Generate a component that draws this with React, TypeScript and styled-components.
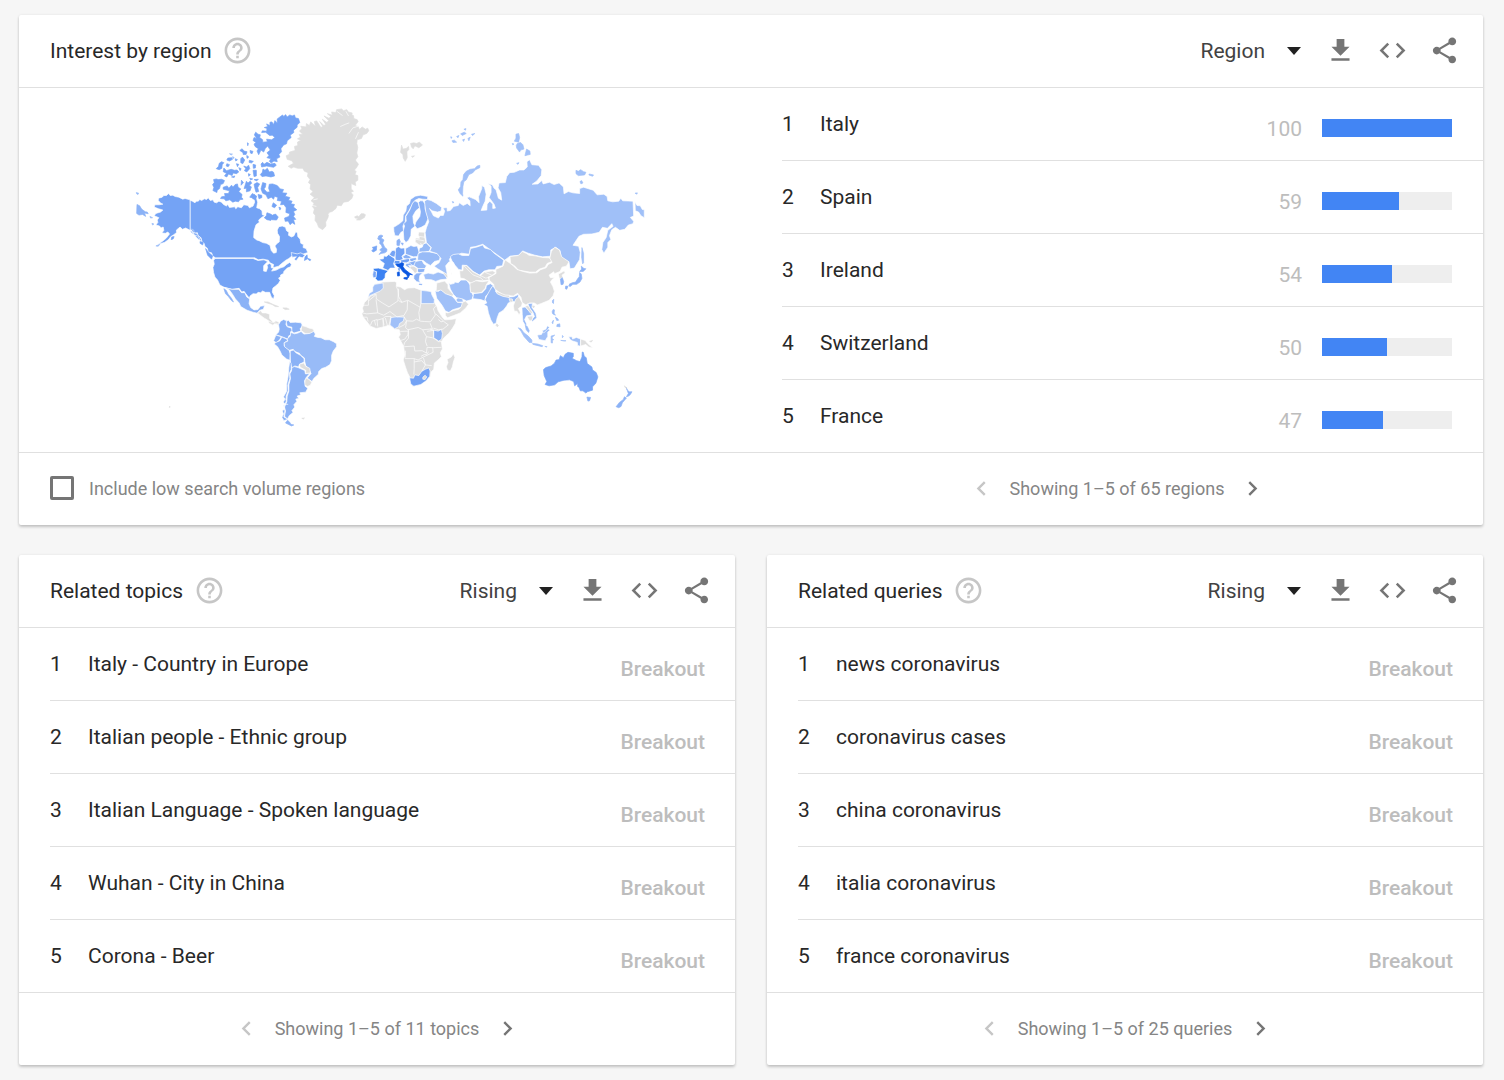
import React, { useId, useState } from "react";
import styled, { createGlobalStyle } from "styled-components";

const GlobalStyle = createGlobalStyle`
  *, *::before, *::after { box-sizing: border-box; }
  body {
    margin: 0;
    background: #f6f6f6;
    color: #282828;
    font-family: Roboto, "Liberation Sans", sans-serif;
    font-size: 21px;
    line-height: 24px;
  }
`;

const Page = styled.main`
  display: grid;
  grid-template-columns: repeat(2, minmax(0, 1fr));
  gap: 30px 32px;
  padding: 15px 21px 14px 19px;
`;

const Card = styled.section<{ $wide?: boolean }>`
  grid-column: ${(p) => (p.$wide ? "1 / -1" : "auto")};
  background: #fff;
  border-radius: 2px;
  box-shadow: 0 2px 3px rgba(0, 0, 0, 0.2), 0 0 3px rgba(0, 0, 0, 0.07);
`;

const Header = styled.header`
  display: flex;
  align-items: center;
  min-height: 73px;
  padding: 0 13px 0 31px;
  border-bottom: 1px solid #e0e0e0;
`;

const Title = styled.h2`
  margin: 0;
  font-size: 21px;
  font-weight: 400;
`;

const IconButton = styled.button<{ $width: number; $tone?: string }>`
  display: flex;
  align-items: center;
  justify-content: center;
  width: ${(p) => p.$width}px;
  height: 48px;
  padding: 0 0 1px;
  border: 0;
  background: none;
  color: ${(p) => p.$tone ?? "#757575"};
  cursor: pointer;
  &:disabled { cursor: default; }
`;

const Icon = styled.svg<{ $size: number }>`
  display: block;
  flex: none;
  width: ${(p) => p.$size}px;
  height: ${(p) => p.$size}px;
  fill: currentColor;
`;

const Tools = styled.div`
  display: flex;
  align-items: center;
  margin-left: auto;
`;

const Picker = styled.label`
  display: grid;
  align-items: center;
  margin-right: 13px;
  > * { grid-area: 1 / 1; }
`;

const PickerArrow = styled.svg`
  justify-self: end;
  width: 14px;
  height: 8px;
  fill: #212121;
  pointer-events: none;
`;

const Select = styled.select`
  appearance: none;
  width: 130px;
  height: 40px;
  padding: 0 36px 0 0;
  border: 0;
  background: transparent;
  color: #424242;
  font: inherit;
  text-align-last: right;
  cursor: pointer;
`;

const RegionBody = styled.div`
  display: grid;
  grid-template-columns: repeat(2, minmax(0, 1fr));
`;

const MapFrame = styled.figure`
  display: flex;
  justify-content: center;
  align-items: center;
  margin: 0;
  padding: 0 0 6px 10px;
`;

const MapDrawing = styled.svg`
  display: block;
  width: 71%;
  height: auto;
  stroke: #fff;
  stroke-width: 2;
  stroke-linejoin: round;
`;

const List = styled.ol`
  margin: 0 0 0 31px;
  padding: 0;
  list-style: none;
`;

const Row = styled.li`
  display: flex;
  align-items: center;
  height: 73px;
  padding-right: 30px;
  border-bottom: 1px solid #e0e0e0;
  &:last-child {
    height: 72px;
    border-bottom: 0;
  }
`;

const Rank = styled.span`
  flex: none;
  width: 38px;
`;

const Name = styled.span`
  flex: 1;
`;

const Value = styled.span<{ $strong?: boolean }>`
  padding-top: 10px;
  color: #bdbdbd;
  font-weight: ${(p) => (p.$strong ? 500 : 400)};
`;

const Track = styled.div`
  width: 130px;
  height: 18px;
  margin: 8px 1px 0 20px;
  background: #eee;
`;

const Fill = styled.div`
  height: 100%;
  background: #4285f4;
`;

const Footer = styled.footer<{ $split?: boolean }>`
  display: grid;
  grid-template-columns: ${(p) => (p.$split ? "repeat(2, minmax(0, 1fr))" : "1fr")};
  align-items: center;
  min-height: 73px;
  border-top: 1px solid #e0e0e0;
  color: #858585;
  font-size: 18px;
`;

const Option = styled.label`
  display: flex;
  align-items: center;
  gap: 15px;
  padding-left: 31px;
`;

const Tick = styled.input`
  appearance: none;
  width: 24px;
  height: 24px;
  margin: 0 0 3px;
  border: 3px solid #757575;
  border-radius: 2px;
  &:checked { background: #757575; }
`;

const PagerBar = styled.nav<{ $inset?: boolean }>`
  display: flex;
  align-items: center;
  justify-content: center;
  padding: ${(p) => (p.$inset ? "0 31px" : "0")};
`;

const PagerText = styled.span`
  margin: 0 14px;
`;

const ICONS = {
  help: "M11 18h2v-2h-2v2zm1-16C6.48 2 2 6.48 2 12s4.48 10 10 10 10-4.48 10-10S17.52 2 12 2zm0 18c-4.41 0-8-3.59-8-8s3.59-8 8-8 8 3.59 8 8-3.59 8-8 8zm0-14c-2.21 0-4 1.79-4 4h2c0-1.1.9-2 2-2s2 .9 2 2c0 2-3 1.75-3 5h2c0-2.25 3-2.5 3-5 0-2.21-1.79-4-4-4z",
  download: "M19 9h-4V3H9v6H5l7 7 7-7zM5 18v2h14v-2H5z",
  code: "M9.4 16.6L4.8 12l4.6-4.6L8 6l-6 6 6 6 1.4-1.4zm5.2 0l4.6-4.6-4.6-4.6L16 6l6 6-6 6-1.4-1.4z",
  share: "M18 16.08c-.76 0-1.44.3-1.96.77L8.91 12.7c.05-.23.09-.46.09-.7s-.04-.47-.09-.7l7.05-4.11c.54.5 1.25.81 2.04.81 1.66 0 3-1.34 3-3s-1.34-3-3-3-3 1.34-3 3c0 .24.04.47.09.7L8.04 9.81C7.5 9.31 6.79 9 6 9c-1.66 0-3 1.34-3 3s1.34 3 3 3c.79 0 1.5-.31 2.04-.81l7.12 4.16c-.05.21-.08.43-.08.65 0 1.61 1.31 2.92 2.92 2.92s2.92-1.31 2.92-2.92-1.31-2.92-2.92-2.92z",
  prev: "M15.41 7.41L14 6l-6 6 6 6 1.41-1.41L10.83 12z",
  next: "M10 6L8.59 7.41 13.17 12l-4.58 4.59L10 18l6-6z",
};

function Glyph({ name, size = 31 }: { name: keyof typeof ICONS; size?: number }) {
  return (
    <Icon $size={size} viewBox="0 0 24 24" aria-hidden="true">
      <path d={ICONS[name]} />
    </Icon>
  );
}

function CardHeader({ title, options }: { title: string; options: string[] }) {
  const id = useId();
  return (
    <Header>
      <Title>{title}</Title>
      <IconButton $width={52} $tone="#c6c6c6" type="button" aria-label={`Help: ${title}`}>
        <Glyph name="help" />
      </IconButton>
      <Tools>
        <Picker htmlFor={id}>
          <Select id={id} aria-label={`${title} view`}>
            {options.map((o) => (
              <option key={o}>{o}</option>
            ))}
          </Select>
          <PickerArrow viewBox="0 0 14 8" aria-hidden="true">
            <path d="M0 0h14L7 8z" />
          </PickerArrow>
        </Picker>
        <IconButton $width={52} type="button" aria-label="Download CSV"><Glyph name="download" /></IconButton>
        <IconButton $width={52} type="button" aria-label="Embed"><Glyph name="code" /></IconButton>
        <IconButton $width={52} type="button" aria-label="Share"><Glyph name="share" /></IconButton>
      </Tools>
    </Header>
  );
}

function Pager({ total, noun, inset }: { total: number; noun: string; inset?: boolean }) {
  return (
    <PagerBar $inset={inset} aria-label={`${noun} pages`}>
      <IconButton $width={29} $tone="#c6c6c6" type="button" disabled aria-label="Previous"><Glyph name="prev" size={29} /></IconButton>
      <PagerText>Showing 1–5 of {total} {noun}</PagerText>
      <IconButton $width={29} type="button" aria-label="Next"><Glyph name="next" size={29} /></IconButton>
    </PagerBar>
  );
}

/* Shades of the interest scale, from no data to the top region. */
const C = {
  none: "#dedede",
  low: "#a0c0f8",
  mild: "#98bbf7",
  mid: "#8bb2f6",
  high: "#74a3f5",
  strong: "#639af4",
  top: "#3c82f2",
  max: "#0b57e0",
};

type Shape = [fill: string, points: string];
/* "shapes" get a white frontier line; "isles" are outlined in their own colour. */
type Sheet = { x: number; y: number; shapes?: Shape[]; isles?: Shape[]; borders?: string };

const SHEETS: Sheet[] = [
  {
    // Canada, United States, Mexico
    x: 570, y: 600,
    shapes: [
      [C.high, "-5,2 2,5 10,10 14,5 20,5 24,0 30,3 38,-2 45,0 50,-5 56,3 64,1 68,8 75,10 82,5 90,8 96,15 105,20 108,14 114,24 130,22 133,28 139,22 150,25 157,16 170,18 174,25 185,20 190,8 187,-6 194,-9 199,8 196,25 205,28 212,34 213,46 221,48 211,54 202,62 204,69 194,76 188,95 187,115 196,122 205,125 214,130 225,132 236,138 240,154 247,162 255,160 256,150 251,140 258,132 264,128 265,112 259,102 258,92 263,82 273,80 283,84 286,94 293,99 292,108 301,113 308,110 314,97 319,101 320,112 327,120 329,132 337,136 336,145 345,148 350,160 335,165 318,168 305,168 293,178 284,183 275,190 262,201 245,206 247,196 236,191 231,183 215,180 201,182 190,176 72,176 64,171 60,161 50,158 47,147 40,142 37,131 31,128 28,115 20,111 17,100 8,102 4,91 -5,92"],
      [C.high, "70,178 185,178 200,184 218,182 230,188 224,192 217,200 217,216 225,217 229,205 227,197 235,193 240,197 240,206 247,207 241,216 255,213 266,207 278,203 286,196 295,190 301,195 298,203 288,207 278,217 277,223 268,228 268,233 262,237 267,244 262,253 254,260 245,267 243,279 249,290 247,300 240,294 235,280 222,280 214,276 208,281 200,280 195,285 185,284 176,291 174,298 168,290 163,284 158,277 151,279 143,268 122,271 98,265 85,258 78,243 70,234 66,220 64,205 68,195 66,184"],
      [C.mid, "98,265 120,271 142,271 150,281 160,281 166,294 175,300 173,314 178,326 188,333 200,332 207,322 220,320 216,331 205,334 198,343 185,340 167,334 148,323 143,312 132,300 122,284 113,272"],
      [C.none, "198,342 208,335 213,342 224,342 235,346 235,359 246,370 256,369 265,374 262,379 251,375 241,376 228,363 219,358"],
      [C.high, "300,160 318,164 329,161 342,168 334,176 324,173 315,185 309,180 316,173 303,174"],
    ],
    isles: [
      [C.mid, "97,269 104,274 110,286 120,298 126,309 120,305 110,292 102,284"],
      [C.none, "219,309 230,309 246,317 262,323 252,323 243,317 230,313"],
      [C.none, "275,327 286,327 294,331 282,332"],
      [C.high, "342,173 348,167 349,177 359,181 357,185 349,179 340,184"],
      [C.mild, "0,88 8,94 4,102 -2,98"], [C.high, "11,102 18,106 23,121 14,112"],
      [C.high, "26,125 35,130 33,137 25,132"], [C.high, "42,148 50,159 63,170 60,180 48,168"],
      [C.high, "246,46 253,44 261,53 256,62 242,61 239,55"],
    ],
  },
  {
    // Alaska
    x: 390, y: 555,
    shapes: [
      [C.high, "175,46 168,44 160,42 153,44 141,38 130,36 123,32 115,33 110,27 104,33 96,33 91,38 80,41 79,48 87,56 93,59 82,61 69,61 67,68 80,73 93,77 86,83 72,87 67,94 81,100 76,107 78,114 72,122 83,125 87,131 94,128 96,138 90,146 101,147 108,143 113,149 103,162 92,171 78,181 99,174 110,166 117,157 126,151 134,145 134,137 145,128 152,135 162,131 175,138"],
      [C.high, "178,137 184,145 193,147 205,158 211,171 205,169 200,156 188,152"],
    ],
    isles: [
      [C.mid, "15,60 23,64 29,74 40,82 46,83 49,88 38,86 41,96 32,90 21,92 14,87"],
      [C.mild, "13,24 20,26 18,30 14,28"], [C.high, "120,158 127,157 124,164 118,166"],
      [C.mild, "54,96 62,100 56,101"], [C.mild, "72,185 84,180 79,186"],
      [C.mild, "60,117 66,119 62,122"],
    ],
  },
  {
    // Western Arctic archipelago
    x: 390, y: 300,
    isles: [
      [C.high, "246,240 254,238 260,240 270,239 279,243 275,252 267,255 264,267 257,272 256,279 244,273 247,264 243,255 248,249"],
      [C.high, "287,259 292,266 300,257 305,262 311,255 318,253 320,263 328,268 322,276 332,285 330,293 335,299 325,301 321,307 312,305 304,308 295,301 283,304 278,298 267,297 270,292 281,290 279,282 291,282 294,274 275,269 275,263"],
      [C.high, "277,205 285,213 299,209 309,212 317,211 322,217 315,222 305,220 302,228 291,223 286,232 279,229 285,221 275,216"],
      [C.high, "263,191 270,186 277,189 272,195 271,206 263,210 254,207 261,200"],
      [C.high, "289,175 301,174 303,179 294,184 286,181"],
      [C.high, "325,152 332,147 338,154 347,156 344,164 335,164 335,159"],
      [C.high, "346,167 352,172 347,176"], [C.high, "328,177 333,172 340,181 334,192 328,189"],
      [C.high, "337,199 345,202 352,197 355,207 346,217 339,213 343,207"],
      [C.high, "365,194 373,196 372,205 366,206"], [C.high, "365,212 375,212 375,229 368,231"],
      [C.high, "351,222 357,225 352,230"], [C.high, "330,242 336,249 329,257"],
      [C.high, "345,245 350,250 357,244 361,251 354,257 360,262 356,274 345,277 345,266 338,267"],
      [C.high, "368,254 377,249 385,253 379,264 382,276 374,278 371,268"],
      [C.high, "363,282 371,287 367,296 355,293"], [C.high, "348,129 351,131 349,138"],
      [C.mild, "294,162 303,163 299,166"], [C.high, "354,182 366,185 360,190 353,188"],
      [C.high, "315,192 322,194 318,201"], [C.high, "356,152 365,155 362,162 357,160"],
      [C.high, "380,285 391,287 392,294 383,298"], [C.high, "286,192 294,195 290,201 284,199"],
      [C.high, "322,204 329,207 326,213"], [C.high, "355,236 364,238 358,241"], [C.high, "311,177 318,180 313,184"],
      [C.high, "300,232 310,229 308,234"], [C.high, "368,240 381,239 376,244"], [C.mild, "303,171 308,173 305,177"],
    ],
  },
  {
    // Ellesmere, Devon, Baffin, Greenland, Iceland
    x: 690, y: 300,
    isles: [
      [C.high, "146,51 154,45 158,50 163,44 168,51 176,45 183,48 190,45 193,54 202,56 206,68 198,75 198,82 187,91 188,98 177,106 180,113 168,123 166,132 157,136 149,147 151,156 143,164 146,172 136,177 138,186 128,184 120,190 114,185 119,177 107,174 113,167 107,159 117,151 109,139 102,146 97,157 89,151 82,165 77,154 81,147 71,140 68,133 74,128 65,122 68,113 76,117 69,105 73,97 80,103 87,105 85,113 94,120 94,127 108,126 106,118 121,120 131,113 123,106 115,107 103,97 91,98 93,93 106,94 107,86 99,83 109,80 106,72 116,77 116,67 122,66 127,74 131,62 138,69 138,57"],
      [C.high, "89,193 94,188 98,194 107,188 118,193 131,191 135,197 127,203 106,199 91,202"],
      [C.high, "95,208 101,212 108,206 114,217 122,215 127,218 130,229 119,232 104,229 92,231 87,225 93,218"],
      [C.high, "94,249 104,252 102,263 98,268 107,278 116,277 112,266 114,254 124,253 138,258 147,268 157,270 153,280 167,281 162,290 176,294 172,302 183,305 179,313 190,315 187,323 197,331 187,336 191,345 187,351 194,360 187,360 191,375 183,370 177,376 171,365 162,366 160,356 173,351 176,343 164,339 165,325 158,315 148,316 151,305 138,303 140,294 130,290 127,299 120,293 110,298 104,286 94,281 89,268"],
      [C.high, "126,310 136,317 130,325 122,321"], [C.high, "107,340 118,344 126,349 119,363 107,361 99,355 105,349"],
      [C.high, "68,285 76,290 72,300 64,298"], [C.high, "143,323 149,326 146,332"],
      [C.none, "317,29 332,27 338,32 348,29 352,36 364,39 363,45 368,47 369,56 379,59 382,65 373,77 382,80 386,89 394,81 404,88 411,85 414,93 408,101 397,105 392,116 379,120 378,131 381,143 378,160 381,171 374,181 383,194 377,204 371,211 376,216 372,225 381,228 381,242 373,247 375,258 361,252 361,268 368,275 360,278 367,286 363,297 352,306 338,308 331,319 319,317 315,327 304,336 294,339 291,355 284,368 285,380 275,391 263,384 258,371 252,363 253,348 247,341 250,329 244,321 249,311 240,304 250,294 237,284 246,276 237,268 239,255 232,249 237,240 229,230 231,219 220,215 215,206 199,206 188,202 180,206 171,200 187,191 182,183 168,179 165,168 174,164 175,157 192,152 190,140 200,137 199,127 209,121 199,117 208,112 204,104 215,103 205,94 212,86 209,79 225,81 226,71 235,77 239,66 253,79 250,65 257,63 270,83 275,79 266,65 279,77 284,73 274,58 288,68 293,62 279,48 294,55 300,50 289,41 304,46 302,36 315,38"],
      [C.none, "371,353 379,349 384,352 391,343 399,343 404,346 401,354 388,362 377,362 382,357 374,356"],
    ],
    borders: "M318,34L335,47M328,80L344,73L355,69M354,101L366,84L382,79M374,117L383,97M345,34L353,48M377,185L386,188M363,282L373,286M240,317L256,321M291,344L303,349M247,301L260,298",
  },
  {
    // South America
    x: 750, y: 900,
    shapes: [
      [C.mid, "97,62 88,67 82,78 84,91 82,100 74,108 90,113 110,121 113,111 119,109 118,99 124,97 121,88 108,84 104,76 107,66"],
      [C.mid, "105,68 112,64 117,71 133,70 150,72 155,82 147,89 149,97 138,100 128,103 122,97 122,85 108,82"],
      [C.none, "152,80 165,84 175,88 185,90 190,98 179,104 162,104 150,95"],
      [C.mid, "74,109 90,114 85,124 75,132 67,126"],
      [C.mid, "72,132 86,126 92,115 107,121 109,126 99,132 99,142 114,154 117,165 116,185 106,181 92,169 87,158 79,144 69,136"],
      [C.mild, "108,121 117,112 119,101 130,105 140,103 150,98 158,106 176,104 188,98 193,106 190,113 201,116 210,117 222,123 235,123 248,129 257,135 257,144 247,157 242,170 242,186 237,198 224,206 212,210 203,219 202,227 188,240 183,249 168,239 180,225 173,211 164,201 161,189 160,178 149,170 145,164 130,158 126,152 114,155 100,144 99,132 110,127"],
      [C.mid, "117,157 127,154 134,162 148,170 159,180 159,190 145,197 142,205 131,202 123,208 118,196"],
      [C.none, "145,197 158,193 164,203 176,209 178,223 163,225 164,215 147,206"],
      [C.none, "163,238 173,242 182,251 178,260 169,264 160,259"],
      [C.mid, "122,207 130,204 141,207 161,216 163,226 176,225 166,236 160,247 162,263 170,269 164,281 146,283 149,289 138,293 143,300 134,302 137,309 128,319 131,326 122,337 126,342 114,352 109,362 100,354 103,338 100,326 107,310 108,293 113,278 113,259 118,240 116,226 121,217"],
      [C.mid, "116,187 120,195 120,213 115,223 116,240 110,260 111,277 105,293 105,309 98,325 101,338 98,356 110,363 98,367 92,357 97,347 93,337 100,333 97,322 102,318 96,311 101,303 97,295 106,279 106,259 111,232 113,206"],
      [C.none, "51,66 60,70 68,71 74,66 84,70 79,76 72,73 65,79 53,73"],
    ],
    isles: [
      [C.mid, "109,366 115,371 119,378 128,380 121,383 111,378 103,374"],
      [C.none, "152,360 160,359 157,362"],
    ],
    borders: "M94,317L111,318M96,300L107,303",
  },
  {
    // Africa, Arabia
    x: 1050, y: 810,
    shapes: [
      [C.none, "72,45 85,43 95,39 132,37 138,40 137,52 150,54 162,62 172,57 192,56 208,62 242,67 245,79 250,91 254,104 260,114 263,125 275,144 283,153 301,152 318,149 315,164 306,179 295,194 280,208 273,219 276,241 270,252 273,264 263,274 252,283 250,302 242,310 240,324 220,342 206,350 187,354 178,342 180,330 171,313 165,296 158,274 163,258 159,233 150,216 144,205 149,198 146,183 132,181 127,177 116,169 95,175 76,179 59,172 46,156 37,145 33,134 38,128 35,118 41,101 50,92 59,72 69,62"],
      [C.low, "72,46 84,44 97,42 98,57 89,66 73,73 57,80 51,88 56,73 66,67 66,54"],
      [C.low, "212,64 230,66 242,68 244,77 252,92 251,104 212,104"],
      [C.low, "121,146 138,144 161,145 158,157 147,164 144,174 132,180 125,174 118,169"],
      [C.mid, "250,184 263,187 273,182 276,194 274,211 265,217 250,207"],
      [C.high, "235,298 239,307 238,323 227,337 211,348 190,353 181,347 177,328 189,329 193,319 205,321 214,308 225,302"],
      [C.none, "217,326 224,320 229,325 224,333 217,332"],
      [C.none, "309,255 314,266 309,281 306,295 300,307 291,304 288,294 293,282 290,272 303,265"],
      [C.low, "254,65 264,67 271,61 284,71 304,80 314,91 321,100 339,102 336,114 319,119 306,123 296,131 285,126 275,109 259,88"],
      [C.none, "285,130 293,132 309,125 325,121 332,115 337,100 346,96 355,106 347,117 330,132 310,140 291,147 285,139"],
      [C.none, "259,42 283,36 293,47 293,58 309,76 307,82 285,74 272,63 257,67 258,56"],
      [C.low, "324,84 337,89 339,99 322,100 317,93"],
    ],
    borders: "M36,109L53,109L53,92L58,82L76,75L77,90L95,102L115,114L142,96L144,59M137,53L142,63L144,83L154,100L172,94L209,115L211,104L212,62M144,95L154,101M53,96L75,78M76,92L81,132L48,135L34,132M81,132L99,139L118,128L139,144L160,140L170,123L171,96M36,145L49,145L52,158M59,170L64,157L79,152L81,173M79,154L97,149L98,176M97,149L104,143L121,143L115,170M104,147L111,173M160,143L168,156L161,168L145,176M168,156L187,157L198,151L210,157L223,158L240,159L255,138L249,120L258,109M209,115L205,131L208,154M168,157L165,176L172,183L203,176L217,183L246,180L239,163M149,188L173,187L172,198L163,211L151,215M174,183L174,208L162,222L159,233M161,234L191,232L193,247L215,246L228,253L230,236L249,237L273,236M163,270L190,270L203,274L219,265L248,251L247,237M191,270L191,301L190,318M191,280L214,276L225,289L244,291M219,268L225,289L214,308M234,249L231,256L221,258L212,263M230,232L225,218L228,203L219,188L217,183M229,204L246,207L250,209M230,188L250,184M249,208L265,219L274,218M249,178L264,183L278,181L294,168L279,157L272,159L264,152M256,135L279,156M239,181L249,184L249,206M97,151L100,170M71,154L75,170M165,246L164,267",
  },
  {
    // Europe, Turkey, Iran
    x: 1050, y: 600,
    shapes: [
      [C.strong, "86,180 98,179 100,170 107,172 114,166 131,177 134,183 129,194 134,207 119,207 112,214 96,207 101,193 89,184"],
      [C.top, "68,208 83,207 102,212 113,215 104,224 103,236 94,245 81,246 74,238 78,218 68,216"],
      [C.high, "68,214 77,218 76,235 67,236 66,226"],
      [C.high, "133,160 136,146 144,142 151,147 162,146 163,163 154,171 158,180 150,185 134,183"],
      [C.high, "116,166 124,154 132,153 135,160 132,174 124,172"],
      [C.mid, "155,172 167,165 183,174 173,181 161,178"],
      [C.strong, "132,184 147,184 149,191 139,195 130,193"],
      [C.high, "149,183 163,180 176,178 178,186 168,191 152,190"],
      [C.mid, "177,178 196,175 199,181 184,188 178,185"],
      [C.mid, "172,190 185,187 195,184 198,189 189,200 177,198"],
      [C.mild, "195,187 214,183 220,194 228,200 223,209 204,209 190,199"],
      [C.mid, "201,209 224,208 221,219 207,221 201,218"],
      [C.mid, "166,193 177,192 188,200 174,199 183,210 176,207 165,200"],
      [C.none, "180,201 190,201 200,208 200,219 193,223 186,213 178,207"],
      [C.mid, "190,230 198,222 217,221 208,229 206,244 210,250 199,248 190,239"],
      [C.mid, "165,148 181,139 190,142 200,140 206,158 201,172 189,173 165,165"],
      [C.mild, "205,158 207,147 216,143 218,134 228,131 241,145 237,156 220,159"],
      [C.none, "205,98 223,99 222,112 226,128 216,137 206,137 194,128 195,116 207,117 203,107"],
      [C.mild, "203,163 215,158 237,158 260,163 270,171 267,183 252,187 240,199 228,192 218,184 201,183"],
      [C.low, "219,226 233,222 249,225 263,219 286,226 290,240 270,242 256,247 243,242 224,241"],
      [C.mid, "130,97 129,84 139,78 148,72 157,64 158,47 166,35 168,20 177,12 180,0 194,-10 210,-13 232,-9 231,0 217,-1 205,-3 194,2 187,11 181,23 175,34 165,50 164,69 157,80 159,95 151,99 144,110 133,109"],
      [C.mid, "158,95 162,80 159,73 167,66 166,51 178,31 186,11 193,4 203,9 207,25 196,34 187,50 189,71 194,80 182,90 181,109 174,123 166,130 160,121"],
      [C.mid, "204,9 209,4 217,4 224,14 224,29 230,45 233,58 224,77 212,84 200,88 193,79 196,68 208,51 210,37"],
      [C.low, "293,242 301,239 309,248 324,251 332,243 349,243 360,258 360,271 369,290 365,302 349,306 337,300 319,296 309,286 300,270"],
      [C.none, "277,220 289,217 304,222 306,236 295,241 286,232"],
    ],
    isles: [
      [C.mid, "84,110 91,107 97,110 91,116 100,122 96,131 102,144 109,150 108,157 102,161 91,163 85,166 93,155 87,152 95,145 92,137 87,133 88,124 81,119"],
      [C.high, "70,143 78,140 77,153 68,158 63,155 68,149 65,144"],
      [C.mid, "139,124 146,119 149,127 146,139 139,138"], [C.mid, "152,131 158,132 156,138"],
      [C.mid, "206,255 215,256 213,257 206,256"],
      [C.max, "135,195 146,194 154,190 160,194 157,202 163,211 177,222 186,227 178,226 173,236 168,226 157,218 148,205 141,202"],
      [C.max, "160,236 172,234 170,241 160,239"], [C.max, "140,220 146,218 147,230 141,231"], [C.strong, "143,209 147,207 146,215"],
      [C.none, "153,-164 157,-152 167,-154 174,-160 175,-151 169,-144 170,-126 164,-115 158,-125 157,-136 150,-142"],
      [C.none, "180,-169 190,-171 198,-169 207,-173 216,-164 205,-156 193,-162 188,-153 183,-158"],
      [C.none, "183,-130 192,-132 187,-127"],
    ],
    borders: "M198,110L223,114M196,120L222,125M209,132L216,137M158,172L163,163",
  },
  {
    // Russia
    x: 1350, y: 360,
    shapes: [
      [C.low, "-78,245 -70,240 -58,243 -42,252 -26,264 -28,275 -39,278 -55,274 -63,267 -57,277 -51,289 -36,296 -30,288 -21,288 -17,275 -22,266 -10,264 -9,275 0,273 10,261 24,258 27,250 39,258 51,252 60,259 59,244 50,235 57,232 76,240 87,250 85,232 95,207 95,198 103,203 108,224 105,245 97,263 93,273 110,272 111,254 119,245 128,254 128,267 136,266 132,254 117,234 123,219 123,200 114,192 127,196 132,206 138,211 145,236 155,242 152,219 144,205 147,190 166,189 170,171 179,159 193,158 209,151 222,151 232,142 231,126 239,120 246,135 266,137 276,150 274,168 261,184 247,194 264,193 276,183 280,193 299,188 313,195 328,190 341,202 343,223 356,216 370,220 390,222 390,207 402,203 431,212 443,226 463,224 473,231 475,244 490,247 508,245 514,236 520,244 551,245 553,290 543,294 553,306 551,313 537,317 526,330 511,333 498,324 487,331 480,349 484,361 475,370 475,384 463,402 457,391 460,370 470,355 475,333 491,321 487,313 474,327 459,324 449,339 427,344 402,345 388,351 370,378 387,381 392,400 390,421 374,447 361,449 358,429 334,416 331,394 318,384 303,392 302,411 278,413 255,408 235,402 218,395 207,408 180,411 164,423 139,405 117,389 98,375 76,382 61,384 57,405 34,402 23,406 7,408 -3,420 2,435 -1,459 -11,465 -38,449 -49,441 -34,431 -28,418 -40,403 -62,396 -57,385 -72,370 -76,340 -72,325 -65,307 -74,277"],
      [C.low, "557,248 563,258 573,259 579,270 585,271 585,295 575,289 568,278 558,274"],
    ],
    isles: [
      [C.low, "89,137 89,144 76,150 67,160 56,165 48,181 41,186 38,201 37,222 38,230 30,223 24,211 31,201 32,187 38,180 40,165 48,155 60,149 73,147 81,139"],
      [C.low, "198,43 206,41 209,53 206,67 193,64 198,55"],
      [C.low, "199,77 202,71 212,68 219,75 222,88 212,91 209,97 200,85"],
      [C.low, "187,71 192,73 188,75"], [C.low, "230,88 240,94 241,104 233,106 225,108"],
      [C.low, "379,152 386,155 393,150 402,156 409,158 405,166 386,168 379,162"],
      [C.low, "419,163 432,166 429,170 418,166"], [C.low, "391,186 396,183 400,190 394,193"],
      [C.low, "557,221 564,220 563,224"], [C.low, "200,131 207,129 204,134"],
      [C.low, "5,63 12,61 19,67 8,68"], [C.low, "19,50 26,47 23,54"], [C.low, "31,42 42,37 48,41 36,47"],
      [C.low, "41,28 47,26 46,31"], [C.low, "53,56 60,52 56,63"], [C.low, "64,43 74,41 67,47"], [C.low, "37,60 43,58 40,65"],
      [C.low, "6,246 11,248 8,251"], [C.low, "1,51 5,52 3,56"],
      [C.low, "397,385 402,403 402,431 399,434 396,414"],
    ],
  },
  {
    // Asia
    x: 1350, y: 690,
    shapes: [
      [C.mild, "0,82 9,76 24,74 36,79 56,79 61,58 81,53 98,47 103,56 121,61 132,72 161,93 157,110 140,112 135,122 116,122 102,126 88,138 69,127 50,109 36,108 35,123 25,121 14,108 5,95 2,88"],
      [C.none, "180,82 205,79 217,67 230,73 237,78 256,80 278,85 299,86 308,96 292,103 286,114 269,120 257,129 240,129 205,123 195,111 182,103"],
      [C.none, "165,92 178,101 190,110 201,121 219,127 240,132 261,131 272,122 289,116 295,106 307,100 300,87 305,66 315,54 329,62 336,83 358,98 350,111 337,114 331,127 314,134 312,128 298,138 302,146 315,145 307,151 302,159 309,172 314,187 310,200 298,214 276,223 263,228 253,222 239,222 228,228 217,221 213,205 203,193 190,201 161,199 145,188 133,179 131,166 117,153 117,145 138,133 137,121 159,111"],
      [C.none, "28,125 38,125 39,110 49,109 68,128 91,140 103,129 128,125 137,131 124,140 114,144 117,153 97,155 79,154 63,163 42,149 30,147"],
      [C.none, "59,163 77,155 96,158 117,155 108,168 106,177 93,191 77,193 61,190"],
      [C.mild, "70,194 96,191 107,179 109,169 121,164 130,170 122,180 121,190 107,201 104,216 92,212 68,209"],
      [C.mild, "121,181 128,170 135,180 139,190 157,200 181,204 191,203 206,196 205,206 195,219 186,217 175,222 170,231 160,244 147,252 141,268 138,283 130,286 122,273 115,252 111,232 101,227 110,222 105,212 110,200"],
      [C.none, "136,186 146,190 165,198 179,199 178,206 158,202 142,195"],
      [C.none, "177,209 187,210 189,219 181,220"],
      [C.none, "197,211 207,203 217,222 215,232 205,239 211,250 208,259 201,247 193,247 190,231"],
      [C.mild, "216,236 226,234 236,244 246,250 244,259 230,261 224,272 231,287 226,290 219,278 217,257"],
      [C.mild, "234,224 248,223 246,235 258,253 261,267 247,279 245,272 254,263 248,249 239,239"],
      [C.none, "225,231 235,230 250,254 242,253"], [C.none, "231,263 249,261 248,272 240,277"],
      [C.low, "262,319 275,317 279,309 292,298 301,304 294,310 294,323 286,336 267,332"],
      [C.mild, "277,306 288,301 293,291 299,296 293,302 282,312"],
      [C.low, "357,324 367,324 369,331 380,326 393,331 392,353 384,350 383,341 369,337 361,332"],
      [C.none, "393,331 407,335 413,343 424,353 430,358 417,355 409,347 393,352"],
      [C.none, "326,135 337,129 344,125 346,132 337,138 340,146 329,149"],
    ],
    isles: [
      [C.none, "140,285 145,290 142,294 138,290"],
      [C.mild, "226,289 232,293 238,306 236,311 229,303"],
      [C.low, "205,297 213,300 222,312 235,322 246,334 246,342 238,341 222,323 213,307"],
      [C.low, "248,344 264,346 279,351 277,354 249,347"], [C.low, "285,353 292,354 290,355"],
      [C.low, "304,322 315,319 310,323 306,328 312,333 308,334 308,343 304,342"],
      [C.none, "420,338 429,335 425,340"], [C.low, "338,320 341,323 338,327"], [C.low, "333,335 349,336 344,337"],
      [C.mild, "310,242 314,243 313,253 317,259 309,255 307,249"], [C.mild, "322,287 330,285 331,294 321,293"],
      [C.mild, "317,265 322,268 327,274 321,275"], [C.mild, "307,281 311,274 309,285"],
      [C.mild, "308,215 312,211 311,224 308,220"], [C.none, "248,231 254,232 251,237"],
      [C.mid, "390,130 395,135 397,148 391,159 381,166 370,166 363,170 358,166 368,161 378,159 384,149 389,143"],
      [C.mid, "395,111 403,118 409,119 401,127 390,127 396,120"],
      [C.mid, "348,171 355,172 351,181 347,179"], [C.mid, "357,169 365,169 361,173"],
      [C.mid, "332,150 338,146 342,158 340,166 334,167"],
    ],
    borders: "M41,110L68,137L91,146L100,154M89,139L107,147L117,145M105,130L125,138",
  },
  {
    // Australia, New Zealand
    x: 1530, y: 930,
    isles: [
      [C.high, "101,183 108,177 124,172 134,164 139,154 148,153 152,141 161,147 166,137 175,131 191,134 191,144 187,149 201,156 211,159 217,145 218,130 221,131 224,143 230,147 233,165 247,175 249,184 260,192 265,205 259,224 249,235 249,245 233,250 229,254 220,247 212,247 208,236 204,234 204,225 195,232 192,219 180,214 163,215 145,220 135,229 118,232 106,228 111,219 103,201"],
      [C.mid, "232,266 243,267 240,277 235,278"],
      [C.mid, "350,236 354,245 360,250 368,250 363,258 358,263 351,265 357,255"],
      [C.mid, "345,265 351,269 339,283 335,294 328,298 320,295 330,282 342,273"],
      [C.none, "345,232 353,239 347,237"],
    ],
  },
];

function WorldMap() {
  return (
    <MapDrawing viewBox="396 312 1546 982" role="img" aria-label="World map of interest by region">
      {SHEETS.map((s) => (
        <g key={`${s.x}-${s.y}`} transform={`translate(${s.x} ${s.y})`}>
          {s.shapes?.map(([fill, points]) => (
            <polygon key={points} fill={fill} points={points} />
          ))}
          {s.isles?.map(([fill, points]) => (
            <polygon key={points} fill={fill} stroke={fill} points={points} />
          ))}
          {s.borders && <path d={s.borders} fill="none" />}
        </g>
      ))}
      <path d="M1336,800l10,-12 14,3 2,12 -12,8 3,14 10,12 -1,16 -12,3 -9,-8 1,-16z" fill="#fff" />
      <path d="M502,1223l4,1 -1,4 -4,-1z" fill={C.none} stroke="none" />
    </MapDrawing>
  );
}

const REGIONS = [
  { name: "Italy", value: 100 },
  { name: "Spain", value: 59 },
  { name: "Ireland", value: 54 },
  { name: "Switzerland", value: 50 },
  { name: "France", value: 47 },
];

const TOPICS = [
  "Italy - Country in Europe",
  "Italian people - Ethnic group",
  "Italian Language - Spoken language",
  "Wuhan - City in China",
  "Corona - Beer",
];

const QUERIES = [
  "news coronavirus",
  "coronavirus cases",
  "china coronavirus",
  "italia coronavirus",
  "france coronavirus",
];

function RelatedCard({ title, items, total, noun }: { title: string; items: string[]; total: number; noun: string }) {
  return (
    <Card>
      <CardHeader title={title} options={["Rising", "Top"]} />
      <List>
        {items.map((item, i) => (
          <Row key={item}>
            <Rank>{i + 1}</Rank>
            <Name>{item}</Name>
            <Value $strong>Breakout</Value>
          </Row>
        ))}
      </List>
      <Footer>
        <Pager total={total} noun={noun} />
      </Footer>
    </Card>
  );
}

export default function App() {
  const [low, setLow] = useState(false);
  return (
    <>
      <GlobalStyle />
      <Page>
        <Card $wide>
          <CardHeader title="Interest by region" options={["Region", "City"]} />
          <RegionBody>
            <MapFrame><WorldMap /></MapFrame>
            <List>
              {REGIONS.map((r, i) => (
                <Row key={r.name}>
                  <Rank>{i + 1}</Rank>
                  <Name>{r.name}</Name>
                  <Value>{r.value}</Value>
                  <Track><Fill style={{ width: `${r.value}%` }} /></Track>
                </Row>
              ))}
            </List>
          </RegionBody>
          <Footer $split>
            <Option>
              <Tick type="checkbox" checked={low} onChange={(e) => setLow(e.target.checked)} />
              Include low search volume regions
            </Option>
            <Pager total={65} noun="regions" inset />
          </Footer>
        </Card>
        <RelatedCard title="Related topics" items={TOPICS} total={11} noun="topics" />
        <RelatedCard title="Related queries" items={QUERIES} total={25} noun="queries" />
      </Page>
    </>
  );
}
